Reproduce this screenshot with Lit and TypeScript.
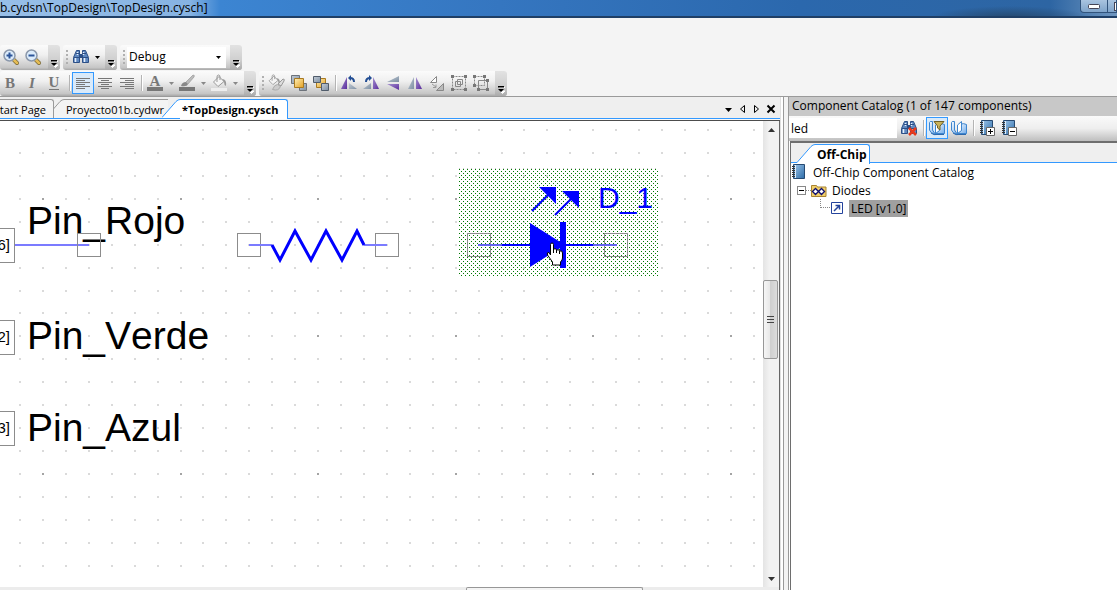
import { LitElement, html, svg, css } from "lit";
import { customElement, property } from "lit/decorators.js";

/* ---------- Icons (16 x 16 unless noted) ---------- */

const gradients = svg`
  <linearGradient id="gold" x1="0" y1="0" x2="1" y2="1"><stop offset="0" stop-color="#fff0b8"/><stop offset="1" stop-color="#e3a021"/></linearGradient>
  <linearGradient id="steel" x1="0" y1="0" x2="1" y2="1"><stop offset="0" stop-color="#c3ccd6"/><stop offset="1" stop-color="#7d8fa3"/></linearGradient>
  <linearGradient id="violet" x1="0" y1="0" x2="1" y2="1"><stop offset="0" stop-color="#a48fd0"/><stop offset="1" stop-color="#5a2d9c"/></linearGradient>
  <linearGradient id="blue" x1="0" y1="0" x2="1" y2="1"><stop offset="0" stop-color="#9fc6ea"/><stop offset="1" stop-color="#2d6ca8"/></linearGradient>
  <linearGradient id="page" x1="0" y1="0" x2="1" y2="1"><stop offset="0" stop-color="#ffffff"/><stop offset="1" stop-color="#6faaea"/></linearGradient>`;

const lens = (plus: boolean) => svg`
  <path d="M10 10 L14 14" stroke="#7a6a3a" stroke-width="4" stroke-linecap="round"/>
  <path d="M10.500 10.500 L14 14" stroke="#e5bc55" stroke-width="2.500" stroke-linecap="round"/>
  <circle cx="6.500" cy="6.500" r="5.500" fill="#dcecfb" stroke="#8b98ab" stroke-width="1.500"/>
  <path d="M3.500 6.500 H9.500" stroke="#2c5599" stroke-width="2"/>
  ${plus ? svg`<path d="M6.500 3.500 V9.500" stroke="#2c5599" stroke-width="2"/>` : null}`;

const binoculars = svg`
  <path d="M3.500 1.500 h3 v12 h-6 v-5z" fill="#5f88c0" stroke="#2c4f86"/>
  <path d="M9.500 1.500 h3 l3 7 v5 h-6z" fill="#5f88c0" stroke="#2c4f86"/>
  <path d="M6.500 5 h3 v4 h-3z" fill="#2c4f86"/>
  <path d="M2.500 9 v4 M11.500 9 v4 M4.500 3 v3 M10.500 3 v3" stroke="#e6effb" stroke-width="1.500"/>
  <path d="M1 8.500 h6 M9 8.500 h6 M3 4.500 h4 M9 4.500 h4" stroke="#2c4f86"/>`;

const bucket = svg`
  <path d="M2.500 8 L8 2.500 L13 7.500 L7 12.500 Z" fill="#f4f4f4" stroke="#999"/>
  <path d="M6 8 V3 q0 -2 1.500 -2 q1.500 0 1.500 2 V6" fill="none" stroke="#999"/>
  <path d="M11 5 q5 0 4 7 q-2 -1 -2 -4z" fill="#999"/>`;

const book = svg`
  <path d="M2.500 0.500 H13.500 V14.500 H2.500Z" fill="url(#blue)" stroke="#274a72"/>
  <path d="M4.500 1 V14" stroke="#e3f0fb"/>
  <path d="M1 2.500h3 M1 4.500h3 M1 6.500h3 M1 8.500h3 M1 10.500h3 M1 12.500h3" stroke="#333"/>`;

const openBook = svg`
  <path d="M.5 2.500 Q.5 1 3.500 1.500 V10 L6.500 14.500 Q1 13 .5 10Z" fill="url(#page)" stroke="#3f86cf"/>
  <path d="M6.500 5 L10.500 1.500 V10.500 L6.500 14.500Z" fill="#fff" stroke="#3f86cf"/>
  <path d="M10.500 4 Q12 3 15.500 4.500 V13.500 H6.500 L10.500 10.500Z" fill="url(#page)" stroke="#3f86cf"/>
  <path d="M2 13 Q5 15.500 8 14.500 H15" stroke="#2d68ac" fill="none"/>`;

const lines = (rows: string) => svg`<path d="${rows}" stroke="#777" fill="none"/>`;

const ICONS: Record<string, unknown> = {
  zoomIn: lens(true),
  zoomOut: lens(false),
  find: binoculars,
  bold: svg`<text class="glyph" x="7" y="13" text-anchor="middle">B</text>`,
  italic: svg`<text class="glyph slant" x="7" y="13" text-anchor="middle">I</text>`,
  underline: svg`<text class="glyph" x="7" y="12" text-anchor="middle">U</text><path d="M2 14.500h10" stroke="#777"/>`,
  alignLeft: lines("M1 3.500h14 M1 5.500h9 M1 7.500h14 M1 9.500h9 M1 11.500h14 M1 13.500h9"),
  alignCenter: lines("M1 3.500h14 M4 5.500h8 M1 7.500h14 M4 9.500h8 M1 11.500h14 M4 13.500h8"),
  alignRight: lines("M1 3.500h14 M6 5.500h9 M1 7.500h14 M6 9.500h9 M1 11.500h14 M6 13.500h9"),
  fontColor: svg`<text class="glyph" x="8" y="11" text-anchor="middle">A</text><path d="M0 12h16v4h-16z" fill="#777"/>`,
  lineColor: svg`<path d="M0 12h16v4h-16z" fill="#777"/><path d="M2 11 q1 -4 5 -4 l2 2 q-1 3 -7 2z" fill="#888"/><path d="M7 7 L14 0 q2 0 1 2 L9 9z" fill="#bbb" stroke="#999" stroke-width=".7"/>`,
  fillColor: svg`<g transform="translate(0 -1)">${bucket}</g><path d="M0 13h16v3h-16z" fill="#eee"/>`,
  format: svg`<g transform="translate(-2 -1) scale(.85)">${bucket}</g><path d="M3.500 14.500 q2 -5 5 -5 l3 2 q-2 5 -8 3z" fill="#ccc" stroke="#aaa"/><path d="M9 9 L14 4 q2 0 1 2 L12 11z" fill="#ddd" stroke="#999"/>`,
  bringFront: svg`<path d="M.5 .5h8v8h-8z" fill="url(#steel)" stroke="#6d737b"/><path d="M8.500 8.500h7v7h-7z" fill="url(#steel)" stroke="#6d737b"/><path d="M3.500 3.500h9v9h-9z" fill="url(#gold)" stroke="#a87920"/>`,
  sendBack: svg`<path d="M3.500 3.500h9v9h-9z" fill="url(#gold)" stroke="#a87920"/><path d="M.5 1.500h7v6h-7z" fill="url(#steel)" stroke="#505c6b"/><path d="M8.500 8.500h7v7h-7z" fill="url(#steel)" stroke="#505c6b"/>`,
  rotateLeft: svg`<path d="M6 2V14H0Z" fill="url(#violet)"/><path d="M8 8L16 14H8Z" fill="url(#steel)"/><path d="M13 7q0 -4 -4 -4" fill="none" stroke="#234e94" stroke-width="2"/><path d="M7 3l3 -3v6z" fill="#234e94"/>`,
  rotateRight: svg`<path d="M10 2V14H16Z" fill="url(#violet)"/><path d="M8 8L0 14H8Z" fill="url(#steel)"/><path d="M3 7q0 -4 4 -4" fill="none" stroke="#234e94" stroke-width="2"/><path d="M9 3l-3 -3v6z" fill="#234e94"/>`,
  flipV: svg`<path d="M14 1V7H2Z" fill="url(#steel)"/><path d="M2 9H14V15Z" fill="url(#violet)"/>`,
  flipH: svg`<path d="M7 2V14H1Z" fill="url(#steel)"/><path d="M9 2V14H15Z" fill="url(#violet)"/>`,
  mirror: svg`<path d="M7.500 1.500V7.500H1.500Z" fill="#fff" stroke="#888"/><path d="M14.500 8.500V15.500H7.500Z" fill="#bbb" stroke="#888"/><path d="M3 9l4 3M7 12.500v-3M7 12.500h-3" stroke="#999" fill="none"/>`,
  group: svg`<path d="M1.500 1.500 H14.500 V14.500 H1.500Z" fill="none" stroke="#888" stroke-dasharray="2 1"/><path d="M4.500 6.500 H9.500 V11.500 H4.500Z M6.500 4.500 H11.500 V9.500 H6.500Z" fill="none" stroke="#888"/><path d="M0 0h3v3h-3z M13 0h3v3h-3z M0 13h3v3h-3z M13 13h3v3h-3z" fill="#777"/>`,
  ungroup: svg`<path d="M1.500 1.500H11.500V10.500H1.500Z" fill="none" stroke="#888" stroke-dasharray="2 1"/><path d="M5.500 5.500H14.500V14.500H5.500Z" fill="none" stroke="#888"/><path d="M0 0h3v3h-3z M10 0h3v3h-3z M0 9h3v3h-3z M4 13h3v3h-3z M13 13h3v3h-3z M13 4h3v3h-3z" fill="#777"/>`,
  clearFind: svg`${binoculars}<path d="M8 8l7 7M15 8l-7 7" stroke="#e8391b" stroke-width="2.500"/>`,
  filterBook: svg`${openBook}<path d="M5 1.500H15L11 6V10L8.500 8V6Z" fill="#c9b25a" stroke="#6e6026"/>`,
  openBook,
  expandAll: svg`${book}<path d="M7.500 7.500h8v8h-8z" fill="#fff" stroke="#666"/><path d="M9 11.500h5M11.500 9v5" stroke="#000"/>`,
  collapseAll: svg`${book}<path d="M7.500 7.500h8v8h-8z" fill="#fff" stroke="#666"/><path d="M9 11.500h5" stroke="#000"/>`,
  book: svg`${book}`,
  folder: svg`<path d="M.5 3.500h5l1 1.500h8.500v9.500h-14.500z" fill="#f1cf6a" stroke="#a88330"/><path d="M1.500 9.500l3 -3 3 3 3 -3 3 3 -3 3 -3 -3 -3 3z" fill="#fff" stroke="#10106e" stroke-width="1.300"/>`,
  part: svg`<path d="M1.500 2.500h11v11h-11z" fill="#fff" stroke="#24439c"/><path d="M4 11l5 -5M5.500 5.500h4v4" fill="none" stroke="#24439c" stroke-width="1.500"/>`,
};

@customElement("ui-icon")
class UiIcon extends LitElement {
  @property() name = "";
  static styles = css`
    :host { display: block; width: 16px; height: 16px; }
    svg { display: block; overflow: visible; }
    .glyph { font-family: "Liberation Serif", serif; font-size: 15px; font-weight: 700; fill: #777; }
    .slant { font-style: italic; }
  `;
  render() {
    return html`<svg width="16" height="16" viewBox="0 0 16 16" aria-hidden="true"><defs>${gradients}</defs>${ICONS[this.name]}</svg>`;
  }
}

type Item = { icon?: string; label?: string; menu?: boolean; on?: boolean };
const SEP: Item = {};

const FORMAT: Item[] = [
  { icon: "bold", label: "Bold" }, { icon: "italic", label: "Italic" }, { icon: "underline", label: "Underline" }, SEP,
  { icon: "alignLeft", label: "Align left", on: true }, { icon: "alignCenter", label: "Align center" }, { icon: "alignRight", label: "Align right" }, SEP,
  { icon: "fontColor", label: "Font color", menu: true }, { icon: "lineColor", label: "Line color", menu: true }, { icon: "fillColor", label: "Fill color", menu: true },
];
const ARRANGE: Item[] = [
  { icon: "format", label: "Format shape" }, { icon: "bringFront", label: "Bring to front" }, { icon: "sendBack", label: "Send to back" }, SEP,
  { icon: "rotateLeft", label: "Rotate left" }, { icon: "rotateRight", label: "Rotate right" }, { icon: "flipV", label: "Flip vertical" },
  { icon: "flipH", label: "Flip horizontal" }, { icon: "mirror", label: "Mirror" }, { icon: "group", label: "Group" }, { icon: "ungroup", label: "Ungroup" },
];
const CATALOG: Item[] = [
  { icon: "clearFind", label: "Clear search" }, SEP, { icon: "filterBook", label: "Filter", on: true }, { icon: "openBook", label: "Open datasheet" }, SEP,
  { icon: "expandAll", label: "Expand all" }, { icon: "collapseAll", label: "Collapse all" },
];

const itemStyles = css`
  button { font: inherit; color: inherit; border: 0; background: none; padding: 0; margin: 0; }
  .tool { display: flex; align-items: center; justify-content: center; width: 22px; height: 22px; border: 1px solid transparent; box-sizing: border-box; flex: none; }
  .tool.on { border-color: #3399ff; background: #d9eafa; }
  .drop { display: flex; align-items: center; justify-content: center; width: 10px; height: 22px; }
  .sep { width: 1px; height: 16px; margin: 0 1px 0 3px; background: #b4b4b4; border-right: 1px solid #fff; }
`;
const caret = (color: string) => html`<svg width="5" height="3" viewBox="0 0 5 3" aria-hidden="true"><path d="M0 0H5L2.500 3Z" fill=${color} /></svg>`;

const renderItems = (items: Item[]) =>
  items.map((it) =>
    it.icon
      ? html`<button class="tool ${it.on ? "on" : ""}" aria-label=${it.label}><ui-icon name=${it.icon}></ui-icon></button>
          ${it.menu ? html`<button class="drop" aria-label="${it.label} options">${caret("#888")}</button>` : null}`
      : html`<span class="sep"></span>`
  );

@customElement("tool-strip")
class ToolStrip extends LitElement {
  @property({ type: Boolean }) grip = false;
  static styles = css`
    :host { display: flex; height: 25px; border-radius: 3px; overflow: hidden; background: linear-gradient(#fbfbfb, #f0f0f0 40%, #c6c6c6 90%, #a8a8a8); }
    .grip { width: 2px; height: 15px; margin: 5px 2px 5px 3px; background: repeating-linear-gradient(#b0b0b0 0 2px, transparent 2px 4px); }
    .content { display: flex; align-items: center; padding: 0 3px 1px 0; }
    .open { padding-right: 4px; }
    .more { width: 12px; border: 0; padding: 0 0 2px; display: flex; align-items: flex-end; justify-content: center; background: linear-gradient(#e2e2e2, #cfcfcf 60%, #aaa); }
  `;
  render() {
    return html`${this.grip ? html`<span class="grip"></span>` : null}
      <div class="content ${this.grip ? "" : "open"}"><slot></slot></div>
      <button class="more" aria-label="Toolbar options">
        <svg width="7" height="8" viewBox="0 0 7 8" aria-hidden="true"><path d="M1 1.500H7 M2 5H7L4.500 7.500Z" stroke="#fff" fill="#fff"/><path d="M0 0h6v1.500H0z M0 3H6L3 6Z" fill="#000"/></svg>
      </button>`;
  }
}

/* ---------- Schematic drawing ---------- */

const STEP = 22.93;
const at = (origin: number, i: number) => Math.round(origin + i * STEP);
function dots(major: boolean): string {
  let d = "";
  for (let r = 0; r < 60; r++)
    for (let c = 0; c < 120; c++) {
      const isMajor = c % 6 === 1 && r % 6 === 3;
      if (isMajor === major) d += `M${at(19, c)} ${at(8, r)}h2v2h-2z`;
    }
  return d;
}
const MINOR = dots(false);
const MAJOR = dots(true);

const PINS = [
  { id: "6]", name: "Pin_Rojo", top: 107, base: 113 },
  { id: "2]", name: "Pin_Verde", top: 199, base: 228 },
  { id: "3]", name: "Pin_Azul", top: 290, base: 320 },
];
const pad = (x: number) => svg`<rect x=${x} y="112" width="23" height="23" fill="none" stroke="#8c8c8c"/>`;

@customElement("schematic-sheet")
class SchematicSheet extends LitElement {
  static styles = css`
    :host { display: block; flex: 1; min-width: 0; min-height: 0; overflow: hidden; background: #fff; }
    svg { display: block; width: 100%; height: 100%; }
    text { font-family: "Liberation Sans", Arial, sans-serif; font-kerning: none; }
    .name { font-size: 39px; }
    .id { font-size: 15px; }
    .part { font-size: 30px; fill: #00f; }
  `;
  render() {
    return html`<svg role="img" aria-label="Schematic">
      <defs>
        <pattern id="dither" x="459" y="48" width="4" height="4" patternUnits="userSpaceOnUse">
          <path d="M0 0h1v1h-1z M2 2h1v1h-1z" fill="#007800"/>
        </pattern>
      </defs>
      <g shape-rendering="crispEdges"><path d=${MINOR} fill="#dadada"/><path d=${MAJOR} fill="#a4a4a4"/></g>
      ${PINS.map(
        (p) => svg`
          <rect x="-30.500" y=${p.top + 0.5} width="45" height="34" fill="#fff" stroke="#8c8c8c"/>
          <text class="id" x="10" y=${p.top + 22} text-anchor="end">${p.id}</text>
          <text class="name" x="27" y=${p.base}>${p.name}</text>`
      )}
      <path d="M15 124H89" stroke="#7b7bff" stroke-width="2"/>
      <g transform="translate(.5 0.500)">${pad(77)}${pad(237)}${pad(375)}</g>
      <path d="M249 124H272M364 124H387" stroke="#7b7bff" stroke-width="2"/>
      <path d="M272 124l8 15l15 -29l16 29l15 -29l16 29l15 -29l7 14" fill="none" stroke="#00f" stroke-width="3"/>
      <rect x="459" y="48" width="200" height="107" fill="url(#dither)" shape-rendering="crispEdges"/>
      <path d="M459 47.500H658" stroke="#ccc" stroke-dasharray="1 3"/>
      <g transform="translate(.5 0.500)">${pad(467)}${pad(604)}</g>
      <path d="M478 124H502M593 124H617" stroke="#6464f0" stroke-width="2"/>
      <path d="M502 124H593" stroke="#00f" stroke-width="2"/>
      <path d="M530 102V146L565 124Z" fill="#00f"/>
      <path d="M560 101H566V147H560Z" fill="#00f"/>
      <path d="M532 90L551 71M555 94L575 74" stroke="#00f" stroke-width="2"/>
      <path d="M539 66H556V83Z" fill="#00f"/>
      <path d="M562 70H579V87Z" fill="#00f"/>
      <text class="part" x="598" y="87">D_1</text>
      <path d="M550.500 134V123.500q0 -1.500 1.500 -1.500t1.500 1.500v4.500q3 -1 3 1q3 -1 3 1q3 -1 3 2v5q0 2 -2 4v3h-8v-3l-5 -7q-1 -3 1.500 -2.500z" fill="#fff" stroke="#000"/>
      <path d="M553.500 128v4M556.500 129v3M559.500 130v3" stroke="#000"/>
    </svg>`;
  }
}

/* ---------- Application shell ---------- */

@customElement("app-root")
class AppRoot extends LitElement {
  static styles = [
    itemStyles,
    css`
      :host { display: flex; flex-direction: column; height: 100vh; overflow: hidden; background: #f4f4f4; color: #000; font: 12px/18px "Open Sans", "Noto Sans", sans-serif; }
      .title { display: flex; align-items: flex-start; justify-content: space-between; height: 16px; border-bottom: 2px solid #1f3f66;
        background: radial-gradient(ellipse 80px 12px at 1010px 18px, #25486d, #25486d00), linear-gradient(90deg, #98bfe8, #86b3e3 190px, #3c85d2 220px, #3576c0 500px, #2b68ad 800px, #2d65a3 1050px, #6f96bf); }
      .title h1 { margin: 0; font-size: 12px; font-weight: 400; line-height: 16px; white-space: nowrap; }
      .window { display: flex; }
      .window button { width: 28px; height: 13px; border: 1px solid #31537b; border-top: 0; background: linear-gradient(#a9c4e0, #7fa4ca); border-radius: 0 0 0 4px; display: flex; align-items: center; justify-content: center; }
      .window .max { width: 9px; border-radius: 0; border-left: 0; overflow: hidden; justify-content: flex-start; padding-left: 6px; }
      .bars { display: flex; flex-direction: column; gap: 1px; padding-top: 27px; border-bottom: 1px solid #9a9a9a; }
      .bar { display: flex; gap: 3px; }
      .combo { display: flex; align-items: center; width: 99px; height: 21px; background: #fff; margin-right: 1px; position: relative; }
      .combo select { appearance: none; width: 100%; height: 21px; border: 0; background: none; padding: 0 14px 0 2px; font: inherit; color: inherit; }
      .combo svg { position: absolute; right: 5px; pointer-events: none; }
      .work { flex: 1; min-height: 0; display: flex; }
      .editor { flex: 1; min-width: 0; display: flex; flex-direction: column; }
      .tabs { display: flex; align-items: flex-end; height: 23px; background: #efefef; border-bottom: 1px solid #4d4d4d; font-size: 11px; box-shadow: inset 0 -1px #f8f8f8, inset 0 -2px #3399ff; }
      .tab { display: flex; height: 20px; white-space: nowrap; margin-bottom: 1px; line-height: 20px; }
      .tab .face { border-top: 1px solid #9a9a9a; border-right: 1px solid #9a9a9a; border-radius: 0 3px 0 0; height: 18px; padding: 0 6px 0 2px; background: #f3f3f3; }
      .tab svg { display: block; }
      .tab.first { width: 54px; justify-content: flex-end; }
      .tab.first .face { padding: 0 7px 0 0; }
      .tab.under .face { padding-right: 4px; border-right: 0; border-radius: 0; }
      .tab.active { font-weight: 700; }
      .tab.active .face { height: 19px; border-color: #3399ff; background: #fff; }
      .tab.over { margin-left: -6px; }
      .tab.over .face { padding: 0 9px 0 2px; }
      .tools { margin-left: auto; display: flex; align-self: center; align-items: center; gap: 5px; padding-right: 4px; }
      .tools button { display: flex; }
      .sheet { flex: 1; min-height: 0; display: flex; border-right: 1px solid #666; }
      .vscroll { width: 16px; display: flex; flex-direction: column; background: linear-gradient(90deg, #e4e4e4, #f2f2f2 40%); }
      .vscroll .arrow { height: 17px; display: flex; align-items: center; justify-content: center; }
      .before { flex: 142; } .after { flex: 211; }
      .vthumb { flex: 78; margin: 0 1px 0 0; border: 1px solid #979797; border-radius: 2px; background: linear-gradient(90deg, #f6f6f6, #e8e8e8 45%, #cfcfcf 50%, #dcdcdc); display: flex; align-items: center; justify-content: center; }
      .hscroll { display: flex; height: 3px; background: #ececec; border-right: 1px solid #666; overflow: hidden; }
      .hleft { flex: 467; } .hright { flex: 136; }
      .hthumb { flex: 175; border: 1px solid #979797; border-bottom: 0; border-radius: 2px 2px 0 0; background: #f4f4f4; }
      .split { width: 9px; box-sizing: border-box; border-left: 1px solid #e0e0e0; background: linear-gradient(90deg, #fff 0 2px, #999 2px 3px, #f3f3f3 3px 7px, #999 7px); }
      .catalog { width: 328px; display: flex; flex-direction: column; background: #fff; }
      .catalog h2 { margin: 0; height: 19px; padding-left: 3px; background: #c8c8c8; font-size: 12px; font-weight: 400; line-height: 18px; }
      .search { display: flex; align-items: center; height: 25px; box-sizing: border-box; padding-bottom: 1px; background: linear-gradient(#fafafa, #eee 50%, #bebebe); }
      .search input { width: 108px; height: 20px; box-sizing: border-box; border: 0; padding: 0 2px; margin-right: 1px; font: inherit; background: #fff; }
      .frame { flex: 1; min-height: 0; margin-left: 1px; border-top: 2px solid #6e6e6e; border-left: 1px solid #6e6e6e; display: flex; flex-direction: column; }
      .ctabs { display: flex; align-items: flex-end; height: 20px; background: #efefef; box-shadow: inset 0 -1px #3399ff; padding-left: 6px; }
      .ctabs .tab { margin: 0; height: 19px; font-size: 12px; }
      .ctabs .face { padding: 0 2px; }
      ul { list-style: none; margin: 0; padding: 0; }
      .row { display: flex; align-items: center; height: 18px; gap: 4px; }
      .level1 { padding-left: 6px; }
      .level2 { padding-left: 29px; }
      .dash { width: 5px; border-top: 1px dotted #888; }
      .elbow { width: 10px; height: 9px; border-left: 1px dotted #888; border-bottom: 1px dotted #888; align-self: flex-start; box-sizing: border-box; }
      .exp { width: 9px; height: 9px; border: 1px solid #888; box-sizing: border-box; display: flex; align-items: center; justify-content: center; background: #fff; }
      .tight { gap: 0; }
      .tight .label { margin-left: 3px; }
      .label { padding: 0 2px; line-height: 17px; height: 17px; white-space: nowrap; }
      .selected { background: #a0a0a0; }
    `,
  ];

  slope(w: number, stroke: string, fill: string) {
    return html`<svg width=${w} height="19" viewBox="${18 - w} 0 ${w} 19" aria-hidden="true"><path d="M0 18.500L14 2.500Q16 .5 18 .5V19H0Z" fill=${fill} /><path d="M0 18.500L14 2.500Q16 .5 18 .5" fill="none" stroke=${stroke} /></svg>`;
  }

  render() {
    return html`
      <header class="title">
        <h1>b.cydsn\\TopDesign\\TopDesign.cysch]</h1>
        <div class="window">
          <button aria-label="Minimize"><svg width="12" height="5"><rect x=".5" y=".5" width="11" height="4" rx="1" fill="#fff" stroke="#445" /></svg></button>
          <button class="max" aria-label="Maximize"><svg width="10" height="9"><rect x=".5" y=".5" width="9" height="8" fill="#fff" stroke="#445" /></svg></button>
        </div>
      </header>
      <nav class="bars" aria-label="Toolbars">
        <div class="bar">
          <tool-strip>
            ${renderItems([{ icon: "zoomIn", label: "Zoom in" }, { icon: "zoomOut", label: "Zoom out" }])}
          </tool-strip>
          <tool-strip grip>
            ${renderItems([{ icon: "find", label: "Find" }])}
            <button class="drop" aria-label="Find options">${caret("#000")}</button>
          </tool-strip>
          <tool-strip grip>
            <label class="combo"><select aria-label="Build configuration"><option>Debug</option><option>Release</option></select>${caret("#000")}</label>
          </tool-strip>
        </div>
        <div class="bar">
          <tool-strip>${renderItems(FORMAT)}</tool-strip>
          <tool-strip grip>${renderItems(ARRANGE)}</tool-strip>
        </div>
      </nav>
      <main class="work">
        <section class="editor">
          <div class="tabs">
            <button class="tab first"><span class="face">Start Page</span></button>
            <button class="tab under">${this.slope(10, "#9a9a9a", "#f3f3f3")}<span class="face">Proyecto01b.cydwr</span></button>
            <button class="tab active over">${this.slope(18, "#3399ff", "#fff")}<span class="face">*TopDesign.cysch</span></button>
            <div class="tools">
              <button aria-label="Open documents"><svg width="9" height="10"><path d="M1 4H8L4.500 8Z" /></svg></button>
              <button aria-label="Scroll left"><svg width="9" height="10"><path d="M6.500 1.500V8.500L2.500 5Z" fill="none" stroke="#000" /></svg></button>
              <button aria-label="Scroll right"><svg width="9" height="10"><path d="M2.500 1.500V8.500L6.500 5Z" fill="none" stroke="#000" /></svg></button>
              <button aria-label="Close"><svg width="10" height="10"><path d="M1.500 1.500L8.500 8.500M8.500 1.500L1.500 8.500" stroke="#000" stroke-width="2" /></svg></button>
            </div>
          </div>
          <div class="sheet">
            <schematic-sheet></schematic-sheet>
            <div class="vscroll">
              <button class="arrow" aria-label="Scroll up"><svg width="7" height="4"><path d="M0 4H7L3.500 0Z" fill="#333" /></svg></button>
              <span class="before"></span>
              <span class="vthumb"><svg width="7" height="8"><path d="M0 .5H7M0 3.500H7M0 6.500H7" stroke="#444" /></svg></span>
              <span class="after"></span>
              <button class="arrow" aria-label="Scroll down"><svg width="7" height="4"><path d="M0 0H7L3.500 4Z" fill="#333" /></svg></button>
            </div>
          </div>
          <div class="hscroll"><span class="hleft"></span><span class="hthumb"></span><span class="hright"></span></div>
        </section>
        <div class="split"></div>
        <aside class="catalog">
          <h2>Component Catalog (1 of 147 components)</h2>
          <div class="search">
            <input type="text" aria-label="Search components" .value=${"led"} />
            ${renderItems(CATALOG)}
          </div>
          <div class="frame">
            <div class="ctabs"><button class="tab active">${this.slope(18, "#3399ff", "#fff")}<span class="face">Off-Chip</span></button></div>
            <ul>
              <li>
                <div class="row"><ui-icon name="book"></ui-icon><span class="label">Off-Chip Component Catalog</span></div>
                <ul>
                  <li>
                    <div class="row level1 tight"><button class="exp" aria-label="Collapse Diodes"><svg width="5" height="1"><path d="M0 .5H5" stroke="#000" /></svg></button><span class="dash"></span><ui-icon name="folder"></ui-icon><span class="label">Diodes</span></div>
                    <ul>
                      <li><div class="row level2 tight"><span class="elbow"></span><ui-icon name="part"></ui-icon><span class="label selected">LED [v1.0]</span></div></li>
                    </ul>
                  </li>
                </ul>
              </li>
            </ul>
          </div>
        </aside>
      </main>
    `;
  }
}
